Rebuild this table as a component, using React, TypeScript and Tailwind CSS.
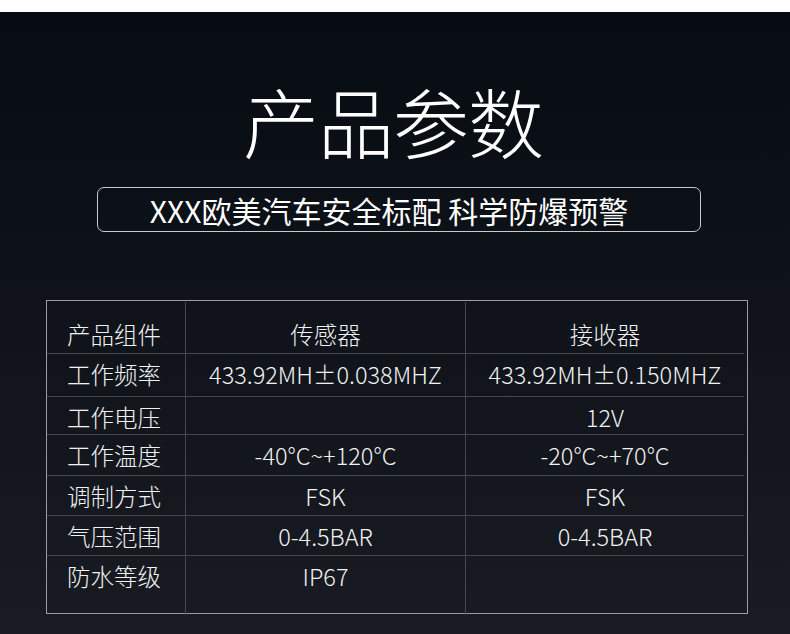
import React from "react";

const rows: { label: string; a: string; b: string; h: string; cls: string }[] = [
  { label: "产品组件", a: "传感器", b: "接收器", h: "h-[52px]", cls: "items-start pt-[12px]" },
  { label: "工作频率", a: "433.92MH±0.038MHZ", b: "433.92MH±0.150MHZ", h: "h-[43px]", cls: "items-center pb-[4px]" },
  { label: "工作电压", a: "", b: "12V", h: "h-[38px]", cls: "items-center pb-[4px]" },
  { label: "工作温度", a: "-40°C~+120°C", b: "-20°C~+70°C", h: "h-[41px]", cls: "items-center pb-[4px]" },
  { label: "调制方式", a: "FSK", b: "FSK", h: "h-[40px]", cls: "items-center pb-[4px]" },
  { label: "气压范围", a: "0-4.5BAR", b: "0-4.5BAR", h: "h-[40px]", cls: "items-center pb-[4px]" },
  { label: "防水等级", a: "IP67", b: "", h: "h-[59px]", cls: "items-start" },
];

export default function App() {
  const font = { fontFamily: '"Noto Sans CJK SC", "Noto Sans", sans-serif' };
  return (
    <div className="w-[790px] h-[634px] flex flex-col overflow-hidden" style={font}>
      <div className="h-[12px] bg-white" />
      <div className="flex-1 flex flex-col items-center bg-gradient-to-b from-[#070b12] to-[#181b22]">
        <h1 className="mt-[70px] text-[76px] leading-[76px] font-light text-white tracking-[-1px] pr-[4px]">
          产品参数
        </h1>
        <div className="self-start ml-[97px] mt-[29px] w-[604px] h-[45px] border border-[#c9cacd] rounded-[7px] flex items-center justify-center pr-[20px]">
          <span className="text-[30px] leading-[30px] font-normal text-white whitespace-pre">
            XXX欧美汽车安全标配 科学防爆预警
          </span>
        </div>
        <div className="self-start ml-[46px] mt-[68px] w-[702px] h-[314px] border border-[#9a9ca1] pr-[3px] pt-[1px] text-[23.5px] font-light text-[#f2f2f2]">
          {rows.map((r, i) => (
            <div
              key={r.label}
              className={`grid grid-cols-[139px_280px_1fr] ${r.h} ${i < rows.length - 1 ? "border-b border-[#44474e]" : ""}`}
            >
              <div className={`flex ${r.cls} pl-[20px] border-r border-[#44474e] leading-[40px]`}>{r.label}</div>
              <div className={`flex ${r.cls} justify-center border-r border-[#44474e] leading-[40px]`}>{r.a}</div>
              <div className={`flex ${r.cls} justify-center leading-[40px]`}>{r.b}</div>
            </div>
          ))}
        </div>
      </div>
    </div>
  );
}
